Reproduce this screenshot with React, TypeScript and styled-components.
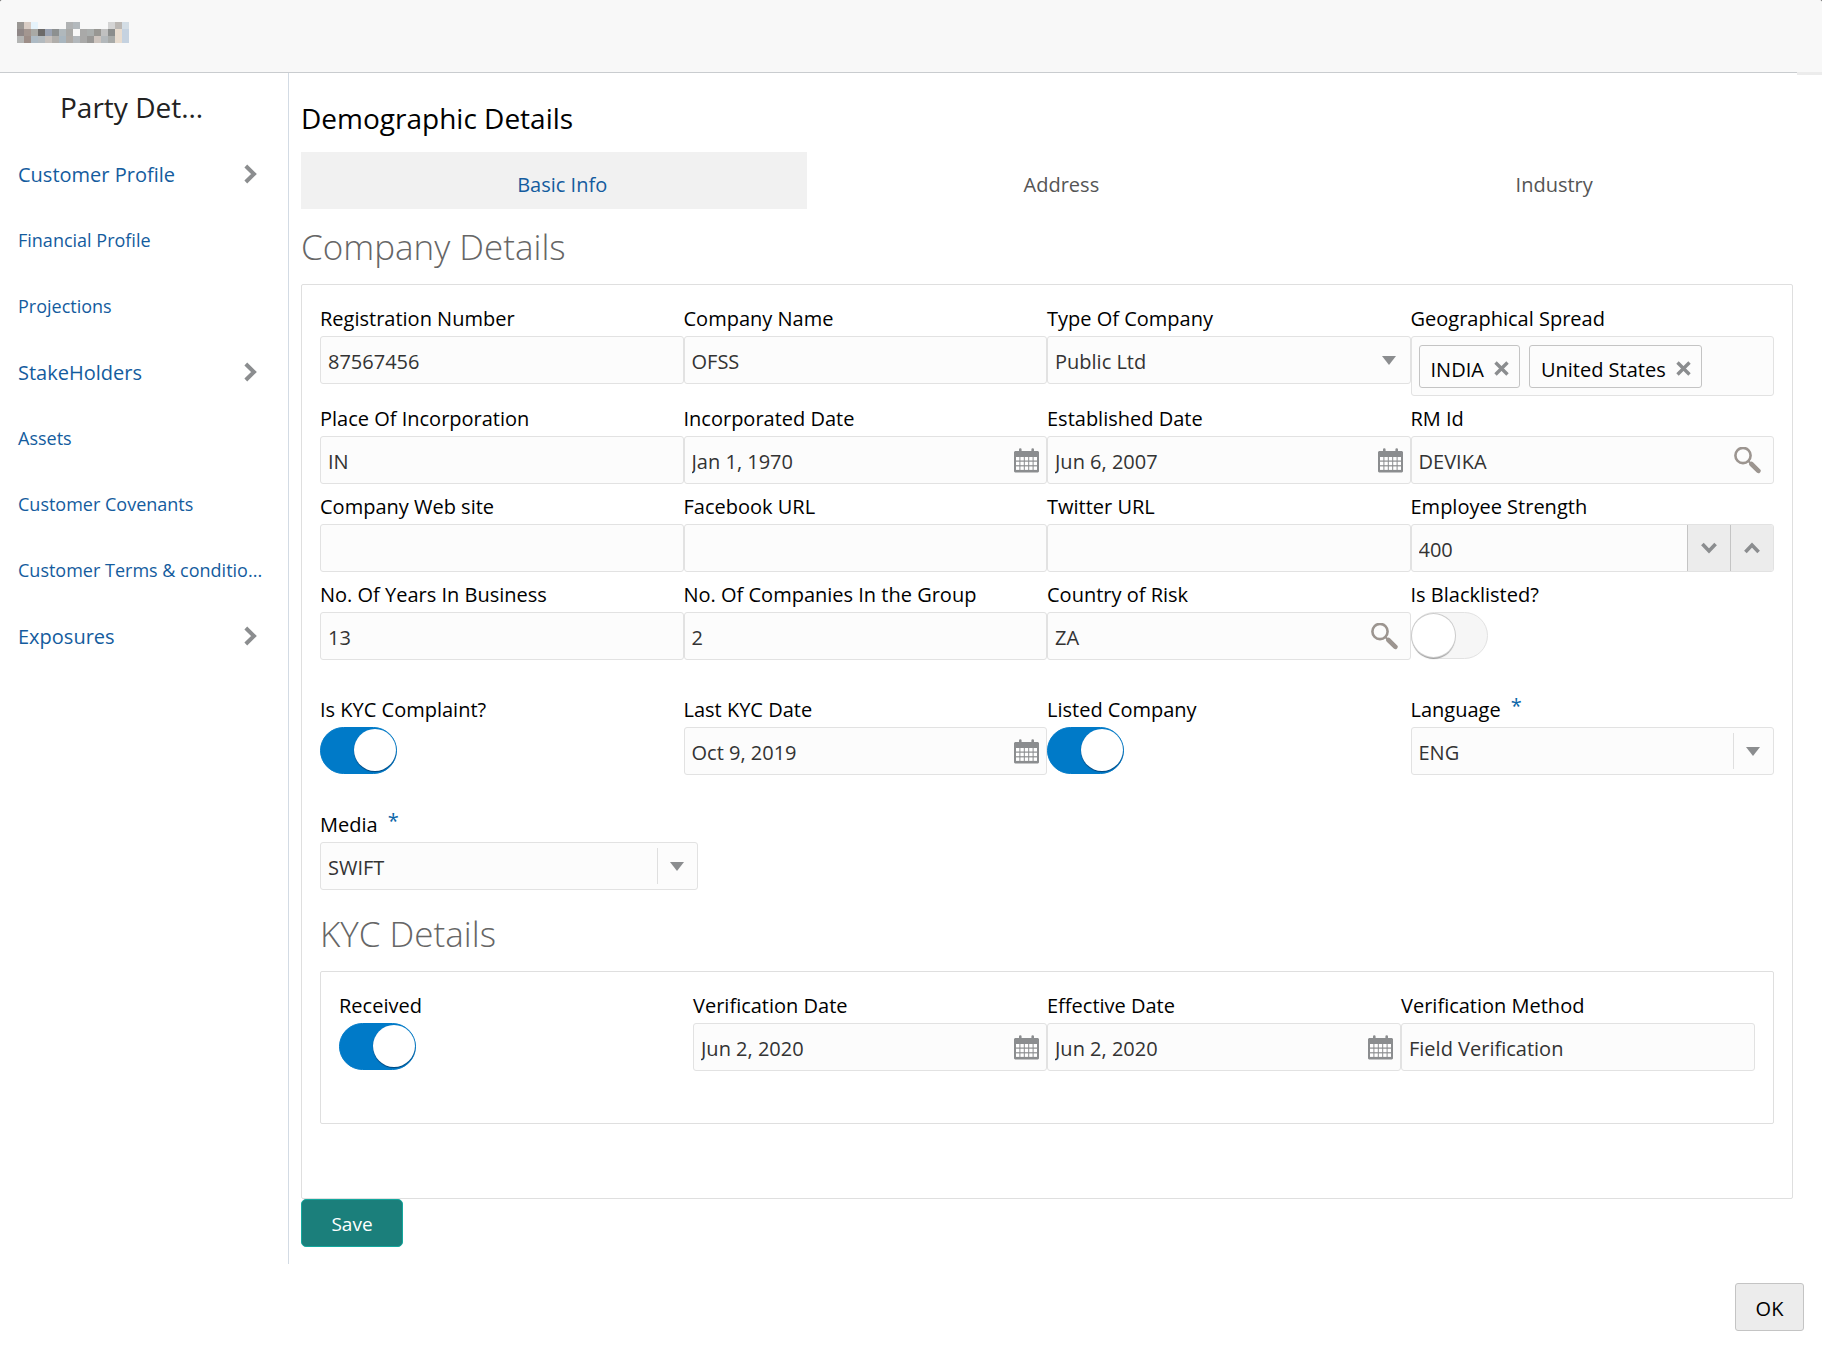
import React, { useId, useState } from 'react';
import styled, { createGlobalStyle, css } from 'styled-components';

const color = {
  link: '#145c9e',
  text: '#333333',
  label: '#000000',
  heading: '#666666',
  line: '#dfdfdf',
  field: '#fcfcfc',
  icon: '#8b8d8f',
  primary: '#1b7f7b',
  switchOn: '#007ac8',
};

const GlobalStyle = createGlobalStyle`
  *, *::before, *::after { box-sizing: border-box; }
  body {
    margin: 0;
    background: #6f6f6f;
    color: ${color.label};
    font-family: 'Open Sans', 'Noto Sans', sans-serif;
    font-size: 20px;
  }
  button, input, select { font: inherit; }
`;

const Page = styled.div`
  min-height: 100vh;
  display: flex;
  flex-direction: column;
  background: #ffffff;
  border-radius: 3px 3px 0 0;
`;

const Header = styled.header`
  display: flex;
  align-items: flex-start;
  position: relative;
  height: 73px;
  padding: 22px 17px;
  background: #f8f8f8;
  border-bottom: 1px solid #c9cccf;
  border-radius: 3px 3px 0 0;

  &::after {
    content: '';
    position: absolute;
    top: 100%;
    right: 0;
    width: 25px;
    height: 3px;
    background: #ececec;
  }
`;

const Body = styled.div`
  display: flex;
`;

const Sidebar = styled.nav`
  flex: none;
  width: 289px;
  border-right: 1px solid #d3dbe4;
`;

const SidebarTitle = styled.h1`
  margin: 0;
  padding-left: 60px;
  line-height: 68px;
  font-size: 28px;
  font-weight: 400;
  color: #222222;
`;

const NavList = styled.ul`
  list-style: none;
  margin: 0;
  padding: 0;
`;

const NavLink = styled.a<{ $group?: boolean }>`
  display: flex;
  align-items: center;
  justify-content: space-between;
  height: 66px;
  padding: 0 31px 0 18px;
  white-space: nowrap;
  text-decoration: none;
  color: ${color.link};
  font-size: ${(p) => (p.$group ? 20 : 18)}px;
  svg { flex: none; }
`;

const Main = styled.main`
  flex: 1;
  min-width: 0;
  padding: 25px 29px 17px 12px;
`;

const Title = styled.h2`
  margin: 0 0 14px;
  line-height: 40px;
  font-size: 28px;
  font-weight: 400;
`;

const Tabs = styled.div`
  display: flex;
`;

const Tab = styled.button<{ $active?: boolean }>`
  flex: 1 1 auto;
  height: 57px;
  padding: 8px 0 0 16px;
  border: 0;
  background: ${(p) => (p.$active ? '#f1f1f1' : 'transparent')};
  color: ${(p) => (p.$active ? color.link : '#555555')};
`;

const SectionTitle = styled.h3`
  margin: 0;
  padding: 14px 0 13px;
  line-height: 48px;
  font-size: 35px;
  font-weight: 300;
  color: ${color.heading};
`;

const Panel = styled.section<{ $bottom: number }>`
  border: 1px solid ${color.line};
  border-radius: 2px;
  padding: 20px 18px ${(p) => p.$bottom}px;
`;

const Fields = styled.div`
  display: grid;
  grid-template-columns: repeat(4, minmax(0, 1fr));
  row-gap: 9px;
  align-items: start;
`;

const WideField = styled.div`
  width: 26%;
  margin: 9px 0 6px;
`;

const Label = styled.label`
  display: flex;
  gap: 10px;
  height: 31px;
  line-height: 28px;
  white-space: nowrap;
`;

const Required = styled.span`
  line-height: 20px;
  color: #0b66a8;
`;

const Control = styled.div`
  display: flex;
  align-items: center;
  position: relative;
  height: 48px;
  border: 1px solid #e2e2e2;
  border-radius: 3px;
  background: ${color.field};
  overflow: hidden;
`;

const fieldText = css`
  flex: 1;
  min-width: 0;
  height: 100%;
  padding: 2px 7px 0;
  border: 0;
  outline: 0;
  background: transparent;
  color: ${color.text};
`;

const TextInput = styled.input`
  ${fieldText}
`;

const Select = styled.select`
  ${fieldText}
  appearance: none;
`;

const Caret = styled.span<{ $divided?: boolean }>`
  display: flex;
  align-items: center;
  justify-content: center;
  position: absolute;
  right: 0;
  width: 40px;
  height: 36px;
  padding-right: 2px;
  border-left: 1px solid ${(p) => (p.$divided ? color.line : 'transparent')};
  pointer-events: none;
`;

const IconButton = styled.button<{ $gap: number }>`
  display: flex;
  flex: none;
  padding: 0;
  margin-right: ${(p) => p.$gap}px;
  border: 0;
  background: transparent;
`;

const StepButton = styled.button`
  display: flex;
  align-items: center;
  justify-content: center;
  width: 43px;
  height: 100%;
  padding: 0;
  border: 0;
  border-left: 1px solid #c4c4c4;
  background: #ececec;
`;

const TagBox = styled.div`
  display: flex;
  align-items: center;
  gap: 9px;
  height: 60px;
  padding: 0 7px;
  border: 1px solid #e2e2e2;
  border-radius: 3px;
  background: ${color.field};
`;

const Tag = styled.span`
  display: flex;
  align-items: center;
  gap: 10px;
  height: 43px;
  padding: 4px 10px 0 11px;
  border: 1px solid #c4c4c4;
  border-radius: 3px;
  line-height: 27px;
  white-space: nowrap;
`;

const TagText = styled.span`
  padding-top: 2px;
`;

const SwitchField = styled.div`
  padding-bottom: 27px;
`;

const SwitchInput = styled.input`
  appearance: none;
  display: flex;
  align-items: flex-start;
  width: 77px;
  height: 47px;
  margin: 0 0 1px;
  padding: 1px 0;
  border: 1px solid #e2e2e2;
  border-radius: 24px;
  background: #f6f6f6;

  &::before {
    content: '';
    width: 43px;
    height: 43px;
    border-radius: 50%;
    background: #ffffff;
    box-shadow: 0 0 0 1px #cccccc, 0 2px 1px #9a9a9a;
  }

  &:checked {
    justify-content: flex-end;
    border-color: ${color.switchOn};
    background: ${color.switchOn};
  }

  &:checked::before {
    width: 42px;
    height: 42px;
    box-shadow: 0 1px 1px #00457c;
  }
`;

const SaveButton = styled.button`
  display: block;
  height: 48px;
  min-width: 102px;
  padding: 2px 28px 0;
  border: 1px solid #14a89e;
  border-radius: 5px;
  background: ${color.primary};
  color: #ffffff;
  font-size: 19px;
`;

const Footer = styled.footer`
  display: flex;
  justify-content: flex-end;
  padding: 19px 18px 22px;
`;

const OkButton = styled.button`
  height: 48px;
  min-width: 69px;
  padding: 2px 18px 0;
  border: 1px solid #c4c4c4;
  border-radius: 3px;
  background: #ececec;
  color: #000000;
`;

const mosaic = [
  ['#9a9794', '#d8ccc4', '#e6f3fb', '', '', '', '', '#b0b2b3', '#b3b9bd', '', '', '', '', '#d4d4d4', '#bbb7b3', '#d3dde5'],
  ['#8f8787', '#a39690', '#a9a9a5', '#6c6a69', '#9aa2b2', '#8d9090', '#b0b8bc', '#a9a9a7', '', '#a9a9a8', '#aaaead', '#989793', '#c0c0c0', '#8b8d8c', '#e8dccf', '#c5d2e0'],
  ['#b4b5b4', '#9d8e88', '#adbac4', '#b3babf', '#c6c0bc', '#b0aeab', '#a9b6bf', '#aeaaa6', '#b3b8bc', '#a9a9a8', '#999896', '#cdc4be', '#b3b8bb', '#a8aaa8', '#e8dccf', '#c5d2e0'],
];

const MaskedName = () => (
  <svg width="112" height="21" viewBox="0 0 16 3" shapeRendering="crispEdges" aria-hidden="true">
    {mosaic.map((row, y) =>
      row.map((fill, x) => (fill ? <rect key={`${x}-${y}`} x={x} y={y} width="1" height="1" fill={fill} /> : null)),
    )}
  </svg>
);

const ChevronRight = () => (
  <svg width="13" height="20" viewBox="0 0 13 20" fill="none" aria-hidden="true">
    <path d="M1.8 2 L10 10 L1.8 18" stroke="#8b8d8f" strokeWidth="4" />
  </svg>
);

const StepIcon = ({ up }: { up?: boolean }) => (
  <svg width="16" height="12" viewBox="0 0 16 12" fill="none" aria-hidden="true">
    <path d={up ? 'M1.4 10 L8 3 L14.6 10' : 'M1.4 2 L8 9 L14.6 2'} stroke={color.icon} strokeWidth="3.6" />
  </svg>
);

const CaretIcon = () => (
  <svg width="14" height="9" viewBox="0 0 14 9" aria-hidden="true">
    <path d="M0 0 H14 L7 9 Z" fill={color.icon} />
  </svg>
);

const CloseIcon = () => (
  <svg width="15" height="15" viewBox="0 0 15 15" fill="none" aria-hidden="true">
    <path d="M1.5 1.5 L13.5 13.5 M13.5 1.5 L1.5 13.5" stroke={color.icon} strokeWidth="3.4" />
  </svg>
);

const CalendarIcon = () => (
  <svg width="25" height="25" viewBox="0 0 25 25" aria-hidden="true">
    <path
      d="M1 3 H5 V1.5 A1.3 1.3 0 0 1 7.6 1.5 V3 H17.4 V1.5 A1.3 1.3 0 0 1 20 1.5 V3 H24 L25 4 V23.5 L24 24.5 H1 L0 23.5 V4 Z"
      fill={color.icon}
    />
    {[0, 1, 2].map((row) =>
      [0, 1, 2, 3, 4].map((col) => (
        <rect key={`${col}-${row}`} x={2 + col * 4.4} y={9 + row * 4.7} width="3.4" height="3.5" fill="#ffffff" />
      )),
    )}
  </svg>
);

const SearchIcon = () => (
  <svg width="27" height="27" viewBox="0 0 27 27" fill="none" aria-hidden="true">
    <circle cx="9" cy="8.5" r="7.6" stroke="#9c9590" strokeWidth="2.6" />
    <path d="M17.4 17 L24.4 23.8" stroke="#9c9590" strokeWidth="4.6" strokeLinecap="round" />
    <path d="M14.6 14.2 L17 16.6" stroke="#9c9590" strokeWidth="2" />
  </svg>
);

type FieldProps = { label: string; value?: string; required?: boolean };

const FieldLabel = ({ id, label, required }: { id: string; label: string; required?: boolean }) => (
  <Label htmlFor={id}>
    {label}
    {required && <Required>*</Required>}
  </Label>
);

const TextField = ({ label, value = '' }: FieldProps) => {
  const id = useId();
  return (
    <div>
      <FieldLabel id={id} label={label} />
      <Control>
        <TextInput id={id} defaultValue={value} />
      </Control>
    </div>
  );
};

const DateField = ({ label, value }: FieldProps) => {
  const id = useId();
  return (
    <div>
      <FieldLabel id={id} label={label} />
      <Control>
        <TextInput id={id} defaultValue={value} />
        <IconButton type="button" aria-label={`Pick ${label}`} $gap={7}>
          <CalendarIcon />
        </IconButton>
      </Control>
    </div>
  );
};

const LookupField = ({ label, value }: FieldProps) => {
  const id = useId();
  return (
    <div>
      <FieldLabel id={id} label={label} />
      <Control>
        <TextInput id={id} defaultValue={value} />
        <IconButton type="button" aria-label={`Search ${label}`} $gap={12}>
          <SearchIcon />
        </IconButton>
      </Control>
    </div>
  );
};

const SelectField = ({ label, value, required }: FieldProps) => {
  const id = useId();
  return (
    <div>
      <FieldLabel id={id} label={label} required={required} />
      <Control>
        <Select id={id} defaultValue={value}>
          <option>{value}</option>
        </Select>
        <Caret $divided={required}>
          <CaretIcon />
        </Caret>
      </Control>
    </div>
  );
};

const StepperField = ({ label, value }: { label: string; value: number }) => {
  const id = useId();
  const [count, setCount] = useState(value);
  return (
    <div>
      <FieldLabel id={id} label={label} />
      <Control>
        <TextInput id={id} inputMode="numeric" value={count} onChange={(e) => setCount(Number(e.target.value) || 0)} />
        <StepButton type="button" aria-label="Decrease" onClick={() => setCount(count - 1)}>
          <StepIcon />
        </StepButton>
        <StepButton type="button" aria-label="Increase" onClick={() => setCount(count + 1)}>
          <StepIcon up />
        </StepButton>
      </Control>
    </div>
  );
};

const TagsField = ({ label, initial }: { label: string; initial: string[] }) => {
  const id = useId();
  const [tags, setTags] = useState(initial);
  return (
    <div>
      <Label as="div" id={id}>{label}</Label>
      <TagBox role="group" aria-labelledby={id}>
        {tags.map((tag) => (
          <Tag key={tag}>
            <TagText>{tag}</TagText>
            <IconButton type="button" aria-label={`Remove ${tag}`} $gap={0} onClick={() => setTags(tags.filter((t) => t !== tag))}>
              <CloseIcon />
            </IconButton>
          </Tag>
        ))}
      </TagBox>
    </div>
  );
};

const Switch = ({ label, on }: { label: string; on?: boolean }) => {
  const id = useId();
  return (
    <SwitchField>
      <FieldLabel id={id} label={label} />
      <SwitchInput id={id} type="checkbox" role="switch" defaultChecked={on} />
    </SwitchField>
  );
};

const navItems = [
  { text: 'Customer Profile', group: true },
  { text: 'Financial Profile' },
  { text: 'Projections' },
  { text: 'StakeHolders', group: true },
  { text: 'Assets' },
  { text: 'Customer Covenants' },
  { text: 'Customer Terms & conditio...' },
  { text: 'Exposures', group: true },
];

const tabNames = ['Basic Info', 'Address', 'Industry'];

export default function App() {
  const [tab, setTab] = useState(tabNames[0]);
  return (
    <Page>
      <GlobalStyle />
      <Header>
        <MaskedName />
      </Header>
      <Body>
        <Sidebar>
          <SidebarTitle>Party Det...</SidebarTitle>
          <NavList>
            {navItems.map((item) => (
              <li key={item.text}>
                <NavLink href="#" $group={item.group}>
                  {item.text}
                  {item.group && <ChevronRight />}
                </NavLink>
              </li>
            ))}
          </NavList>
        </Sidebar>
        <Main>
          <Title>Demographic Details</Title>
          <Tabs role="tablist">
            {tabNames.map((name) => (
              <Tab key={name} type="button" role="tab" aria-selected={tab === name} $active={tab === name} onClick={() => setTab(name)}>
                {name}
              </Tab>
            ))}
          </Tabs>
          <SectionTitle>Company Details</SectionTitle>
          <Panel $bottom={74}>
            <Fields>
              <TextField label="Registration Number" value="87567456" />
              <TextField label="Company Name" value="OFSS" />
              <SelectField label="Type Of Company" value="Public Ltd" />
              <TagsField label="Geographical Spread" initial={['INDIA', 'United States']} />
              <TextField label="Place Of Incorporation" value="IN" />
              <DateField label="Incorporated Date" value="Jan 1, 1970" />
              <DateField label="Established Date" value="Jun 6, 2007" />
              <LookupField label="RM Id" value="DEVIKA" />
              <TextField label="Company Web site" />
              <TextField label="Facebook URL" />
              <TextField label="Twitter URL" />
              <StepperField label="Employee Strength" value={400} />
              <TextField label="No. Of Years In Business" value="13" />
              <TextField label="No. Of Companies In the Group" value="2" />
              <LookupField label="Country of Risk" value="ZA" />
              <Switch label="Is Blacklisted?" />
              <Switch label="Is KYC Complaint?" on />
              <DateField label="Last KYC Date" value="Oct 9, 2019" />
              <Switch label="Listed Company" on />
              <SelectField label="Language" value="ENG" required />
            </Fields>
            <WideField>
              <SelectField label="Media" value="SWIFT" required />
            </WideField>
            <SectionTitle>KYC Details</SectionTitle>
            <Panel $bottom={25}>
              <Fields>
                <Switch label="Received" on />
                <DateField label="Verification Date" value="Jun 2, 2020" />
                <DateField label="Effective Date" value="Jun 2, 2020" />
                <TextField label="Verification Method" value="Field Verification" />
              </Fields>
            </Panel>
          </Panel>
          <SaveButton type="button">Save</SaveButton>
        </Main>
      </Body>
      <Footer>
        <OkButton type="button">OK</OkButton>
      </Footer>
    </Page>
  );
}
